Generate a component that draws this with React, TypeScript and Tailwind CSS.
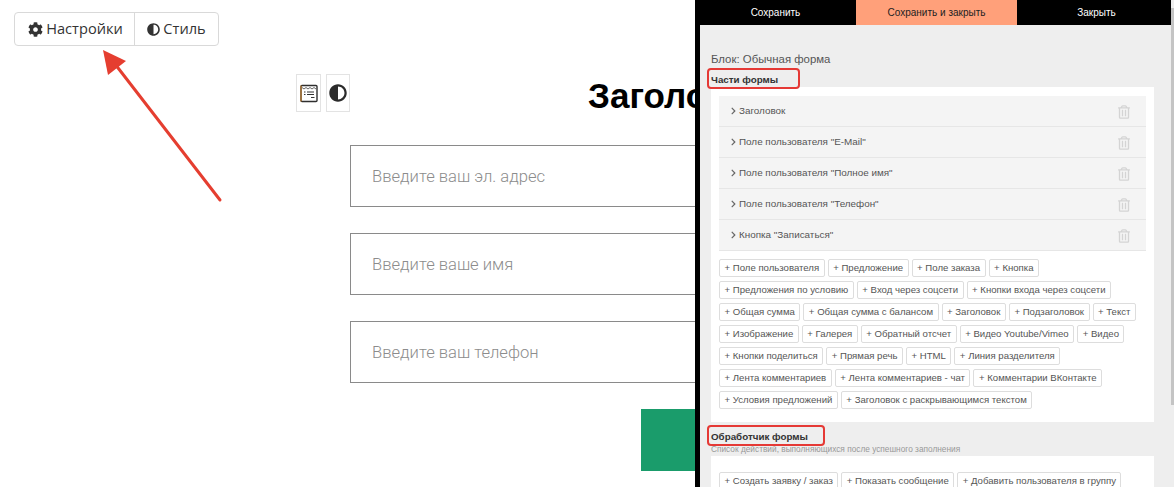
import React from 'react';
import { FaAdjust, FaChevronRight, FaCog, FaRegTrashAlt } from 'react-icons/fa';

const formParts = [
  'Заголовок',
  'Поле пользователя "E-Mail"',
  'Поле пользователя "Полное имя"',
  'Поле пользователя "Телефон"',
  'Кнопка "Записаться"',
];

const addButtons = [
  ['Поле пользователя', 'Предложение', 'Поле заказа', 'Кнопка'],
  ['Предложения по условию', 'Вход через соцсети', 'Кнопки входа через соцсети'],
  ['Общая сумма', 'Общая сумма с балансом', 'Заголовок', 'Подзаголовок', 'Текст'],
  ['Изображение', 'Галерея', 'Обратный отсчет', 'Видео Youtube/Vimeo', 'Видео'],
  ['Кнопки поделиться', 'Прямая речь', 'HTML', 'Линия разделителя'],
  ['Лента комментариев', 'Лента комментариев - чат', 'Комментарии ВКонтакте'],
  ['Условия предложений', 'Заголовок с раскрывающимся текстом'],
];

const handlerButtons = ['Создать заявку / заказ', 'Показать сообщение', 'Добавить пользователя в группу'];

const placeholders = ['Введите ваш эл. адрес', 'Введите ваше имя', 'Введите ваш телефон'];

const Chip: React.FC<{ label: string }> = ({ label }) => (
  <span className="flex h-[18px] items-center whitespace-nowrap rounded-[2px] border border-[#ddd] bg-white px-[4.500px] text-[9.6px] leading-none text-[#555]">
    + {label}
  </span>
);

const Marked: React.FC<{ children: React.ReactNode; width: string }> = ({ children, width }) => (
  <div className={`relative flex h-[20px] items-center text-[9.8px] font-bold text-[#333] ${width}`}>
    {children}
    <span className="absolute -left-[4px] -top-[2px] bottom-[1px] right-0 rounded-[4px] border-[2px] border-[#e53935]" />
  </div>
);

const App: React.FC = () => {
  return (
    <div className="flex h-[487px] w-[1174px] overflow-hidden bg-white">
      {/* Page preview */}
      <div className="relative w-[695px] shrink-0 overflow-hidden">
        <div className="pl-[14px] pt-[12px]">
          <div className="flex h-[34px] w-[205px] rounded-[4px] border border-[#d9d9d9] font-['Open_Sans',sans-serif] text-[14.6px] text-[#333]">
            <div className="flex w-[120px] items-center justify-center gap-[3px] border-r border-[#d9d9d9] pl-[2px]">
              <FaCog className="h-[15px] w-[15px]" />
              Настройки
            </div>
            <div className="flex flex-1 items-center justify-center gap-[3px]">
              <FaAdjust className="h-[13px] w-[13px]" />
              Стиль
            </div>
          </div>
        </div>

        <div className="mt-[28px] flex h-[38px] pl-[296px]">
          <div className="flex h-[38px] w-[25px] shrink-0 items-center justify-center border border-[#e3e3e3]">
            <svg viewBox="0 0 18 18" className="h-[19px] w-[18px]" fill="none">
              <rect x="1" y="1" width="16" height="16" rx="1" fill="#fff" stroke="#2f2f2f" strokeWidth="1.4" />
              <path d="M1 1v16" stroke="#c97a1a" strokeWidth="1" />
              <path d="M2 3l2 1.5L6 3l2 1.5L10 3l2 1.5L14 3l2 1.5" stroke="#555" strokeWidth="0.9" />
              <path d="M4 7.5h1.500M7 7.5h7M4 10h1.500M7 10h7M11 13h3.500" stroke="#333" strokeWidth="1.1" />
            </svg>
          </div>
          <div className="ml-[5px] flex h-[38px] w-[24px] shrink-0 items-center justify-center border border-[#e3e3e3]">
            <FaAdjust className="h-[18px] w-[18px] text-[#2b2b2b]" />
          </div>
          <h1 className="ml-[238px] mt-[3px] whitespace-nowrap font-['Liberation_Sans',sans-serif] text-[35px] font-bold leading-[38px] text-black">
            Заголовок
          </h1>
        </div>

        <div className="ml-[350px] mt-[33px] flex w-[500px] flex-col gap-[26px]">
          {placeholders.map((text) => (
            <div
              key={text}
              className="flex h-[62px] items-center border border-[#8a8a8a] pl-[21px] pt-[2px] font-['Roboto',sans-serif] text-[16.6px] font-light text-[#8c8c8c]"
            >
              {text}
            </div>
          ))}
        </div>

        <div className="ml-[641px] mt-[26px] h-[62px] w-[200px] bg-[#1a9c6b]" />

        {/* Red arrow annotation */}
        <svg className="absolute left-0 top-0 h-[220px] w-[240px]" viewBox="0 0 240 220" fill="none">
          <path d="M220 200L115 64" stroke="#e53e30" strokeWidth="3" strokeLinecap="round" />
          <path d="M103 50L126 61L108 75Z" fill="#e53e30" />
        </svg>
      </div>

      {/* Settings panel */}
      <div className="relative flex w-[479px] min-w-0 shrink-0 flex-col border-l-[5px] border-black bg-[#eee] font-['Liberation_Sans',sans-serif]">
        <div className="-ml-[5px] flex h-[25px] w-[476px] shrink-0 bg-black text-[10px]">
          <div className="flex w-[161px] items-center justify-center text-white">Сохранить</div>
          <div className="flex w-[161px] items-center justify-center bg-[#ffa07a] text-[#222]">Сохранить и закрыть</div>
          <div className="flex flex-1 items-center justify-center pl-[5px] text-white">Закрыть</div>
        </div>

        <div className="min-w-0 flex-1 overflow-hidden pl-[11px] pr-[20px]">
          <div className="mt-[26px] text-[11.4px] leading-[16px] text-[#555]">Блок: Обычная форма</div>
          <div className="mt-[3px]">
            <Marked width="w-[89px]">Части формы</Marked>
          </div>

          <div className="mt-[-3px] bg-white px-[8px] pb-[13px] pt-[9px]">
            <div className="flex flex-col">
              {formParts.map((part) => (
                <div
                  key={part}
                  className="flex h-[31px] items-center justify-between border-b border-[#e6e6e6] bg-[#f4f4f4] pl-[12px] pr-[16px] pt-[1px] text-[9.9px] text-[#555]"
                >
                  <span className="flex items-center gap-[3px]">
                    <FaChevronRight className="h-[8px] w-[5px] text-[#666]" />
                    {part}
                  </span>
                  <FaRegTrashAlt className="h-[14px] w-[12px] text-[#d4d4d4]" />
                </div>
              ))}
            </div>
            <div className="mt-[8px] flex flex-col gap-[4px]">
              {addButtons.map((row) => (
                <div key={row.join()} className="flex gap-[3px]">
                  {row.map((label) => (
                    <Chip key={label} label={label} />
                  ))}
                </div>
              ))}
            </div>
          </div>

          <div className="mt-[5px]">
            <Marked width="w-[114px]">Обработчик формы</Marked>
          </div>
          <div className="-mt-[2px] whitespace-nowrap text-[8.3px] leading-[9px] text-[#999]">
            Список действий, выполняющихся после успешного заполнения
          </div>
          <div className="mt-[2px] bg-white px-[8px] pb-[8px] pt-[16px]">
            <div className="flex gap-[3px]">
              {handlerButtons.map((label) => (
                <Chip key={label} label={label} />
              ))}
            </div>
          </div>
        </div>

        {/* Scrollbar */}
        <div className="absolute right-0 top-[8px] h-[397px] w-[3px] bg-[#c4c4c4]" />
      </div>
    </div>
  );
};

export default App;
